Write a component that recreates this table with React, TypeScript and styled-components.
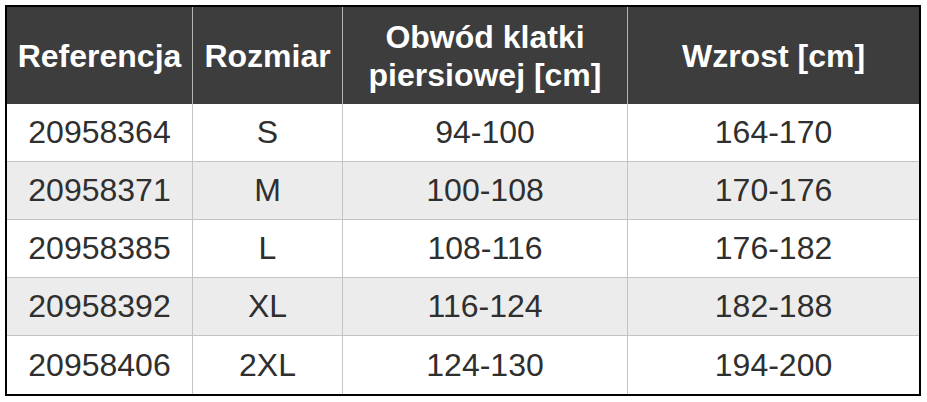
import React from "react";
import styled, { createGlobalStyle } from "styled-components";

const GlobalStyle = createGlobalStyle`
  html, body {
    margin: 0;
    padding: 0;
    background: #ffffff;
  }
  body {
    font-family: "Liberation Sans", Arial, sans-serif;
  }
`;

type Row = {
  ref: string;
  size: string;
  chest: string;
  height: string;
};

const rows: Row[] = [
  { ref: "20958364", size: "S", chest: "94-100", height: "164-170" },
  { ref: "20958371", size: "M", chest: "100-108", height: "170-176" },
  { ref: "20958385", size: "L", chest: "108-116", height: "176-182" },
  { ref: "20958392", size: "XL", chest: "116-124", height: "182-188" },
  { ref: "20958406", size: "2XL", chest: "124-130", height: "194-200" },
];

const widths = [186, 150, 285, 291];

const Page = styled.div`
  padding: 5px 6px 6px 5px;
`;

const Table = styled.table`
  width: 916px;
  table-layout: fixed;
  border-collapse: separate;
  border-spacing: 0;
  border: 2px solid #000000;
`;

const HeadCell = styled.th<{ $last?: boolean }>`
  height: 97px;
  padding: 0 4px;
  box-sizing: border-box;
  background: #3d3d3d;
  color: #ffffff;
  font-size: 32px;
  font-weight: 700;
  line-height: 38px;
  text-align: center;
  vertical-align: middle;
  border-right: ${(p) => (p.$last ? "none" : "1px solid #b4b4b4")};
`;

const BodyRow = styled.tr<{ $striped: boolean }>`
  background: ${(p) => (p.$striped ? "#ececec" : "#ffffff")};
`;

const Cell = styled.td<{ $last?: boolean; $bottom?: boolean }>`
  height: 58px;
  padding: 0;
  box-sizing: border-box;
  color: #2f2f2f;
  font-size: 32px;
  text-align: center;
  vertical-align: middle;
  border-right: ${(p) => (p.$last ? "none" : "1px solid #c4c4c4")};
  border-bottom: ${(p) => (p.$bottom ? "none" : "1px solid #c4c4c4")};
`;

export default function App() {
  return (
    <Page>
      <GlobalStyle />
      <Table>
        <colgroup>
          {widths.map((w) => (
            <col key={w} style={{ width: w }} />
          ))}
        </colgroup>
        <thead>
          <tr>
            <HeadCell>Referencja</HeadCell>
            <HeadCell>Rozmiar</HeadCell>
            <HeadCell>
              Obwód klatki
              <br />
              piersiowej [cm]
            </HeadCell>
            <HeadCell $last>Wzrost [cm]</HeadCell>
          </tr>
        </thead>
        <tbody>
          {rows.map((r, i) => {
            const bottom = i === rows.length - 1;
            return (
              <BodyRow key={r.ref} $striped={i % 2 === 1}>
                <Cell $bottom={bottom}>{r.ref}</Cell>
                <Cell $bottom={bottom}>{r.size}</Cell>
                <Cell $bottom={bottom}>{r.chest}</Cell>
                <Cell $bottom={bottom} $last>
                  {r.height}
                </Cell>
              </BodyRow>
            );
          })}
        </tbody>
      </Table>
    </Page>
  );
}
